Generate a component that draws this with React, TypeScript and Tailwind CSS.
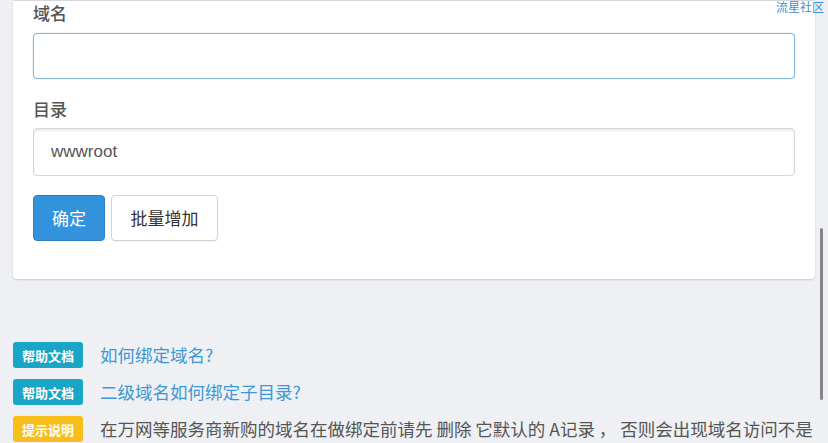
const cjk = "font-['Noto_Sans_CJK_SC','Noto_Sans',sans-serif]";

function Badge({ color, children }: { color: string; children: string }) {
  return (
    <span
      className={`${color} inline-flex items-center justify-center w-[70px] h-[26px] rounded-[3px] text-white text-[13px] font-bold leading-none`}
    >
      {children}
    </span>
  );
}

function HelpRow({
  badge,
  color,
  text,
  link,
}: {
  badge: string;
  color: string;
  text: string;
  link?: boolean;
}) {
  return (
    <div className="flex items-center gap-[17px] h-[26px]">
      <Badge color={color}>{badge}</Badge>
      <span
        className={`text-[17.5px] whitespace-nowrap ${link ? "text-[#3f98d6]" : "text-[#555]"}`}
      >
        {text}
      </span>
    </div>
  );
}

export default function App() {
  return (
    <div className={`relative w-[828px] h-[443px] overflow-hidden bg-[#eef0f3] ${cjk}`}>
      <div className="ml-[13px] w-[802px] bg-white border-t border-[#d5d7db] rounded-b-[4px] shadow-[0_1px_2px_rgba(0,0,0,0.15)] px-5 pt-[1px] pb-[38px]">
        <div className="text-[17px] leading-[22px] font-medium text-[#555]">域名</div>
        <input
          className="mt-[9px] block w-full h-[46px] rounded-[4px] border border-[#86b6de] bg-white px-[17px] text-[17px] outline-none shadow-[0_0_2px_rgba(102,175,233,0.4)]"
          defaultValue=""
        />
        <div className="mt-[19px] text-[17px] leading-[22px] font-medium text-[#555]">目录</div>
        <input
          className="mt-[8px] block w-full h-[48px] rounded-[4px] border border-[#d6d6d6] bg-white px-[17px] text-[17px] text-[#555] font-['Liberation_Sans',sans-serif] outline-none shadow-[inset_0_2px_2px_rgba(0,0,0,0.08)]"
          defaultValue="wwwroot"
        />
        <div className="mt-[19px] flex gap-[6px]">
          <button className="w-[72px] h-[46px] rounded-[4px] bg-[#3293dc] border border-[#2b81c4] text-white text-[17px]">
            确定
          </button>
          <button className="w-[107px] h-[46px] rounded-[4px] bg-white border border-[#d3d3d3] text-[#333] text-[17px] shadow-[0_1px_1px_rgba(0,0,0,0.06)]">
            批量增加
          </button>
        </div>
      </div>

      <div className="mt-[63px] ml-[13px] flex flex-col gap-[11px]">
        <HelpRow badge="帮助文档" color="bg-[#19a5c6]" text="如何绑定域名?" link />
        <HelpRow badge="帮助文档" color="bg-[#19a5c6]" text="二级域名如何绑定子目录?" link />
        <HelpRow
          badge="提示说明"
          color="bg-[#f8be1c]"
          text="在万网等服务商新购的域名在做绑定前请先 删除 它默认的 A记录 ， 否则会出现域名访问不是"
        />
      </div>

      <div className="absolute left-[820px] top-[228px] w-[3px] h-[172px] rounded-full bg-[#858585]" />
      <div className="absolute left-[776px] top-0 text-[12px] leading-[14px] text-[#3d8fcf] whitespace-nowrap">
        流星社区
      </div>
    </div>
  );
}
